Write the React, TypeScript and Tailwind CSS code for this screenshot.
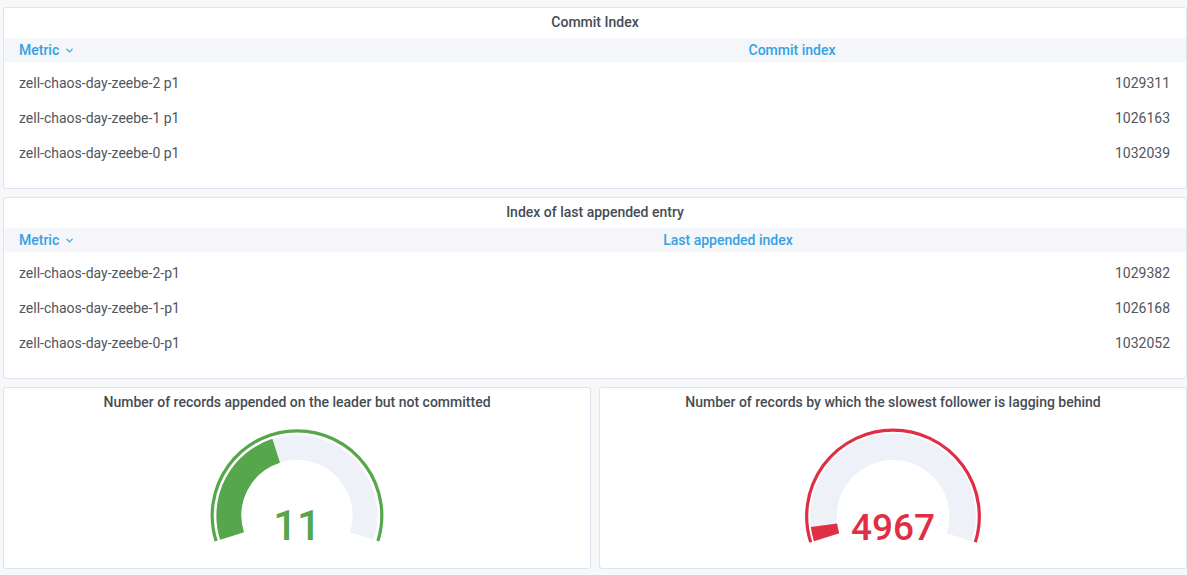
import { ChevronDown } from "lucide-react";

type Row = { metric: string; value: string };

type TableProps = {
  title: string;
  column: string;
  firstColWidth: string;
  rows: Row[];
};

const commitRows: Row[] = [
  { metric: "zell-chaos-day-zeebe-2 p1", value: "1029311" },
  { metric: "zell-chaos-day-zeebe-1 p1", value: "1026163" },
  { metric: "zell-chaos-day-zeebe-0 p1", value: "1032039" },
];

const appendedRows: Row[] = [
  { metric: "zell-chaos-day-zeebe-2-p1", value: "1029382" },
  { metric: "zell-chaos-day-zeebe-1-p1", value: "1026168" },
  { metric: "zell-chaos-day-zeebe-0-p1", value: "1032052" },
];

function TablePanel({ title, column, firstColWidth, rows }: TableProps) {
  return (
    <div className="h-[182px] bg-white border border-[#dde4ed] rounded-[3px] flex flex-col">
      <div className="h-[30px] pb-[2px] flex items-center justify-center text-[14px] font-medium text-[#464c54]">
        {title}
      </div>
      <div className="h-[24px] bg-[#f4f6f9] flex items-center text-[14px] font-medium text-[#33a2e5]">
        <div className={`${firstColWidth} pl-[15px] flex items-center gap-[5px]`}>
          Metric
          <ChevronDown size={11} strokeWidth={2.5} />
        </div>
        <div className="flex-1 text-center">{column}</div>
      </div>
      <div className="pt-[4px]">
        {rows.map((r) => (
          <div
            key={r.metric}
            className="h-[35px] flex items-center justify-between pl-[15px] pr-[16px] text-[14px] text-[#52555c]"
          >
            <span>{r.metric}</span>
            <span>{r.value}</span>
          </div>
        ))}
      </div>
    </div>
  );
}

function pt(cx: number, cy: number, r: number, deg: number) {
  const a = (deg * Math.PI) / 180;
  return [cx + r * Math.cos(a), cy - r * Math.sin(a)];
}

function arc(cx: number, cy: number, r: number, from: number, to: number) {
  const [x0, y0] = pt(cx, cy, r, from);
  const [x1, y1] = pt(cx, cy, r, to);
  const large = from - to > 180 ? 1 : 0;
  return `M ${x0} ${y0} A ${r} ${r} 0 ${large} 1 ${x1} ${y1}`;
}

type GaugeProps = {
  title: string;
  value: string;
  color: string;
  fillTo: number;
  fontSize: number;
  grow?: number;
};

function GaugePanel({ title, value, color, fillTo, fontSize, grow = 0 }: GaugeProps) {
  const cx = 100;
  const cy = 97.6 + grow / 2;
  const start = 197.5;
  const end = -17.5;
  return (
    <div className="flex-1 h-[182px] bg-white border border-[#dde4ed] rounded-[3px] flex flex-col">
      <div className="h-[30px] pb-[2px] flex items-center justify-center text-[14px] font-medium text-[#464c54]">
        {title}
      </div>
      <div className="flex-1 flex justify-center">
        <svg width="200" height="149" viewBox="0 0 200 149">
          <path d={arc(cx, cy, 84.8 + grow, start, end)} fill="none" stroke={color} strokeWidth={3.2} />
          <path d={arc(cx, cy, 68.1 + grow, start, end)} fill="none" stroke="#eef2f8" strokeWidth={25 + grow} />
          <path d={arc(cx, cy, 68.1 + grow, start, fillTo)} fill="none" stroke={color} strokeWidth={25 + grow} />
          <text
            x={cx}
            y={122}
            textAnchor="middle"
            fill={color}
            fontSize={fontSize}
            fontWeight={500}
            fontFamily="Roboto, sans-serif"
          >
            {value}
          </text>
        </svg>
      </div>
    </div>
  );
}

export default function App() {
  return (
    <div className="w-[1187px] h-[575px] bg-[#f7f8fa] pl-[3px] pt-[7px] flex flex-col gap-[8px] font-['Roboto',sans-serif]">
      <TablePanel
        title="Commit Index"
        column="Commit index"
        firstColWidth="w-[394px]"
        rows={commitRows}
      />
      <TablePanel
        title="Index of last appended entry"
        column="Last appended index"
        firstColWidth="w-[266px]"
        rows={appendedRows}
      />
      <div className="flex gap-[8px]">
        <GaugePanel
          title="Number of records appended on the leader but not committed"
          value="11"
          color="#56a64b"
          fillTo={107.8}
          fontSize={42}
        />
        <GaugePanel
          title="Number of records by which the slowest follower is lagging behind"
          value="4967"
          color="#e02f44"
          fillTo={187.4}
          fontSize={37}
          grow={1.5}
        />
      </div>
    </div>
  );
}
